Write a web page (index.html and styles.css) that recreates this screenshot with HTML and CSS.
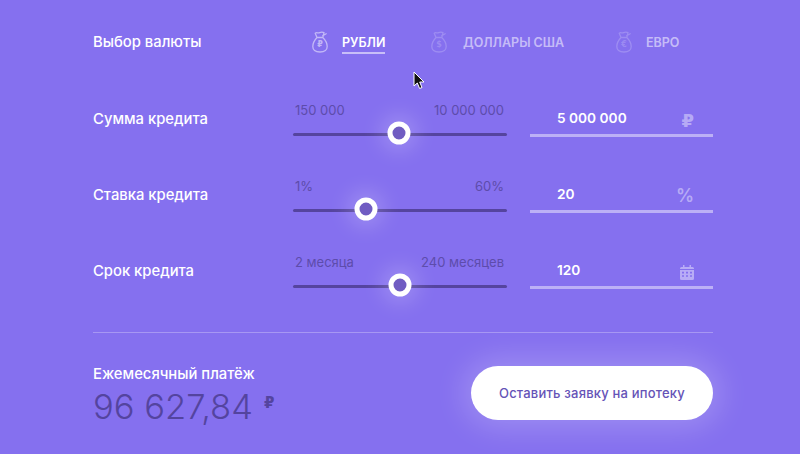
FILE: index.html
```html
<!DOCTYPE html>
<html lang="ru">
<head>
<meta charset="utf-8">
<title>Калькулятор</title>
<link rel="stylesheet" href="styles.css">
</head>
<body>
<svg class="sprite" width="0" height="0" aria-hidden="true">
  <symbol id="bag" viewBox="0 0 16 22">
    <path d="M5 6.500 3.200 2.200C4.600 1 6 2.400 7.600 1.600 9 1 10.500.8 12 1.600L10.800 6.500M5 6.500h5.800M10.800 4.600l3.400-1.800M5 6.500C2.600 9 .8 12.600.8 15.600c0 3.400 2.400 5.400 7.200 5.400s7.200-2 7.200-5.400c0-3-1.800-6.600-4.400-9.100" fill="none" stroke="currentColor" stroke-width="1.300" stroke-linejoin="round" stroke-linecap="round"/>
  </symbol>
</svg>
<main class="page">
  <section class="currency">
    <h2 class="label">Выбор валюты</h2>
    <div class="tabs">
      <div class="tab tab-active">
        <span class="bag"><svg width="16" height="22"><use href="#bag"/></svg><i>₽</i></span>
        <span class="tab-name">РУБЛИ</span>
      </div>
      <div class="tab tab-muted tab-wide">
        <span class="bag"><svg width="16" height="22"><use href="#bag"/></svg><i>$</i></span>
        <span class="tab-name">ДОЛЛАРЫ США</span>
      </div>
      <div class="tab tab-muted">
        <span class="bag"><svg width="16" height="22"><use href="#bag"/></svg><i>€</i></span>
        <span class="tab-name">ЕВРО</span>
      </div>
    </div>
  </section>

  <section class="row">
    <h2 class="label">Сумма кредита</h2>
    <div class="slider">
      <div class="limits"><span>150 000</span><span>10 000 000</span></div>
      <div class="track"><span class="thumb" style="left:49.5%"></span></div>
    </div>
    <div class="field"><span class="value">5 000 000</span><span class="unit">₽</span></div>
  </section>

  <section class="row">
    <h2 class="label">Ставка кредита</h2>
    <div class="slider">
      <div class="limits"><span>1%</span><span>60%</span></div>
      <div class="track"><span class="thumb" style="left:34.1%"></span></div>
    </div>
    <div class="field"><span class="value">20</span><span class="unit unit-percent">%</span></div>
  </section>

  <section class="row">
    <h2 class="label">Срок кредита</h2>
    <div class="slider">
      <div class="limits"><span>2 месяца</span><span>240 месяцев</span></div>
      <div class="track"><span class="thumb" style="left:50%"></span></div>
    </div>
    <div class="field"><span class="value">120</span>
      <span class="unit"><svg width="14" height="15" viewBox="0 0 14 15"><path fill="currentColor" fill-rule="evenodd" d="M3 0h1.500v2h5V0H11v2h1.500A1.500 1.500 0 0 1 14 3.500V4H0v-.5A1.500 1.500 0 0 1 1.500 2H3zM0 5h14v8.500a1.500 1.500 0 0 1-1.500 1.500h-11A1.500 1.500 0 0 1 0 13.500zm2 1.800v1.600h2V6.800zm4 0v1.600h2V6.800zm4 0v1.600h2V6.800zm-8 3.400v1.600h2v-1.600zm4 0v1.600h2v-1.600zm4 0v1.600h2v-1.600z"/></svg></span>
    </div>
  </section>

  <section class="summary">
    <div class="payment">
      <h2 class="label">Ежемесячный платёж</h2>
      <p class="amount">96 627,84<span class="amount-unit">₽</span></p>
    </div>
    <button class="cta" type="button">Оставить заявку на ипотеку</button>
  </section>
</main>
<svg class="cursor" width="13" height="19" viewBox="0 0 13 19" aria-hidden="true"><path d="M1 1v14l3.300-3 2.300 5.500 2.400-1L6.700 11H11z" fill="#111" stroke="#fff" stroke-width="1"/></svg>
</body>
</html>
```
FILE: styles.css
```css
* { box-sizing: border-box; }
html, body { margin: 0; height: 100%; }
body {
  position: relative;
  overflow: hidden;
  background: #8570ef;
  font-family: Inter, "Liberation Sans", sans-serif;
  color: #fff;
}
.sprite { position: absolute; }
.page { padding: 0 87px 0 93px; }
.label { margin: 0; font-size: 14.800px; font-weight: 500; }

.currency { display: flex; align-items: center; height: 84px; }
.currency .label { width: 219px; flex: none; }
.tabs { display: grid; grid-template-columns: 119px 185px auto; }
.tab { display: flex; align-items: center; gap: 14px; font-size: 12.500px; font-weight: 600; }
.tab-wide { gap: 16px; }
.tab-name { position: relative; }
.tab-active .tab-name::after {
  content: ""; position: absolute; left: 0; right: 0; top: 17px;
  height: 2px; background: rgba(255, 255, 255, .55);
}
.tab-active .bag { color: rgba(255, 255, 255, .5); }
.tab-muted .bag { color: rgba(255, 255, 255, .2); }
.tab-muted .tab-name { color: rgba(255, 255, 255, .55); }
.bag { position: relative; display: block; width: 16px; height: 22px; }
.bag svg { display: block; }
.bag i {
  position: absolute; left: 0; right: 0; top: 9px;
  text-align: center; font: 700 8px/10px "DejaVu Sans", sans-serif;
}

.row {
  display: grid;
  grid-template-columns: 200px 214px 206px;
  height: 76px;
  align-items: start;
}
.row .label { padding-top: 25px; line-height: 20px; }
.slider { padding-top: 17px; }
.limits {
  display: flex; justify-content: space-between;
  padding: 0 3px 0 2px;
  font-size: 13px; line-height: 18px; color: #5d4cab;
}
.track { position: relative; height: 3px; margin-top: 14px; background: #55449f; border-radius: 2px; }
.thumb {
  position: absolute; top: 0;
  width: 23px; height: 23px;
  transform: translate(-50%, -50%);
  border: 5px solid #fff; border-radius: 50%;
  background: #705cc2;
  box-shadow: 0 0 22px 6px rgba(255, 255, 255, .22);
}
.field {
  display: flex; justify-content: space-between; align-items: center;
  margin-left: 23px;
  height: 39.500px;
  margin-top: 13px;
  padding: 0 19px 0 27px;
  border-bottom: 3px solid rgba(255, 255, 255, .45);
}
.value { font-size: 13.700px; font-weight: 600; margin-top: 5px; }
.unit {
  display: flex; color: rgba(255, 255, 255, .42);
  font: 700 18px/20px "DejaVu Sans", sans-serif;
  margin-top: 11px;
}
.unit-percent { font: 600 18px/20px Inter, sans-serif; margin-top: 9px; }

.summary {
  display: flex; justify-content: space-between;
  margin-top: 20px;
  height: 120px;
  border-top: 1px solid rgba(255, 255, 255, .28);
  padding-top: 33px;
}
.payment .label { line-height: 18px; margin-top: -1px; }
.amount {
  margin: 2px 0 0; font-size: 34.500px; line-height: 44px; font-weight: 300;
  color: #54449f; white-space: nowrap;
}
.amount-unit { font: 700 15px/1 "DejaVu Sans", sans-serif; vertical-align: 11px; margin-left: 11px; }
.cta {
  width: 242px; height: 54px; border: 0; border-radius: 27px;
  background: #fff; color: #6553b7;
  font: 500 13px Inter, "Liberation Sans", sans-serif;
  letter-spacing: .2px;
  box-shadow: 0 0 30px 8px rgba(255, 255, 255, .2);
}
.cursor { position: absolute; left: 413px; top: 71px; }
```
